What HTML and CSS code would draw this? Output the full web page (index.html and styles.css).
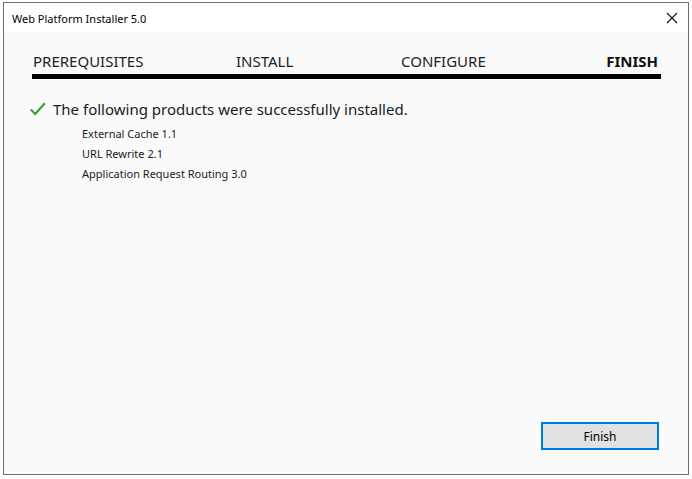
FILE: index.html
```html
<!DOCTYPE html>
<html>
<head>
<meta charset="utf-8">
<link rel="stylesheet" href="styles.css">
</head>
<body>
<div class="window">
  <div class="titlebar">
    <span class="title">Web Platform Installer 5.0</span>
    <svg class="close" width="12" height="12" viewBox="0 0 12 12"><path d="M1 1 L11 11 M11 1 L1 11" stroke="#111" stroke-width="1.1" fill="none"/></svg>
  </div>
  <div class="content">
    <div class="tabs">
      <span class="tab">PREREQUISITES</span>
      <span class="tab">INSTALL</span>
      <span class="tab">CONFIGURE</span>
      <span class="tab active">FINISH</span>
    </div>
    <div class="bar"></div>
    <div class="status">
      <svg class="check" width="16" height="14" viewBox="0 0 16 14"><path d="M0.8 7.5 L5.3 12 L14.8 1.2" stroke="#3a9a35" stroke-width="2.1" fill="none"/></svg>
      <span class="heading">The following products were successfully installed.</span>
    </div>
    <ul class="products">
      <li>External Cache 1.1</li>
      <li>URL Rewrite 2.1</li>
      <li>Application Request Routing 3.0</li>
    </ul>
    <div class="spacer"></div>
    <div class="actions">
      <button class="btn">Finish</button>
    </div>
  </div>
</div>
</body>
</html>
```
FILE: styles.css
```css
html, body {
  margin: 0;
  padding: 0;
  background: #ffffff;
}
body {
  padding: 2px 0 0 3px;
  font-family: "Segoe UI", "Noto Sans", "Open Sans", sans-serif;
  color: #1a1a1a;
}
.window {
  box-sizing: border-box;
  width: 686px;
  height: 473px;
  border: 1px solid #707070;
  display: flex;
  flex-direction: column;
  background: #fafafa;
}
.titlebar {
  height: 29px;
  background: #ffffff;
  display: flex;
  align-items: center;
  justify-content: space-between;
  padding: 0 10px 0 8px;
  flex-shrink: 0;
}
.title {
  font-size: 11px;
  color: #000;
  margin-top: 1px;
}
.close {
  display: block;
  margin-top: 1px;
}
.content {
  flex: 1;
  display: flex;
  flex-direction: column;
  padding: 0 27px 0 28px;
}
.tabs {
  display: grid;
  grid-template-columns: 203px 165px 1fr auto;
  padding: 18px 3px 0 1px;
  font-size: 15px;
  line-height: 22px;
  color: #222;
}
.tab.active {
  font-weight: 700;
  color: #111;
}
.bar {
  height: 5px;
  background: #000;
  margin-top: 2px;
}
.status {
  display: flex;
  align-items: center;
  margin-top: 19px;
  margin-left: -2px;
}
.check {
  display: block;
  margin-right: 7px;
}
.heading {
  font-size: 15px;
  line-height: 22px;
  color: #1a1a1a;
}
.products {
  list-style: none;
  margin: 4px 0 0 0;
  padding: 0 0 0 50px;
  font-size: 11px;
  line-height: 20px;
  color: #1a1a1a;
}
.spacer {
  flex: 1;
}
.actions {
  display: flex;
  justify-content: flex-end;
  padding-bottom: 24px;
  padding-right: 2px;
}
.btn {
  box-sizing: border-box;
  width: 118px;
  height: 28px;
  border: 2px solid #0078d7;
  background: #e1e1e1;
  font-family: inherit;
  font-size: 12px;
  color: #000;
  padding: 0;
}
```
